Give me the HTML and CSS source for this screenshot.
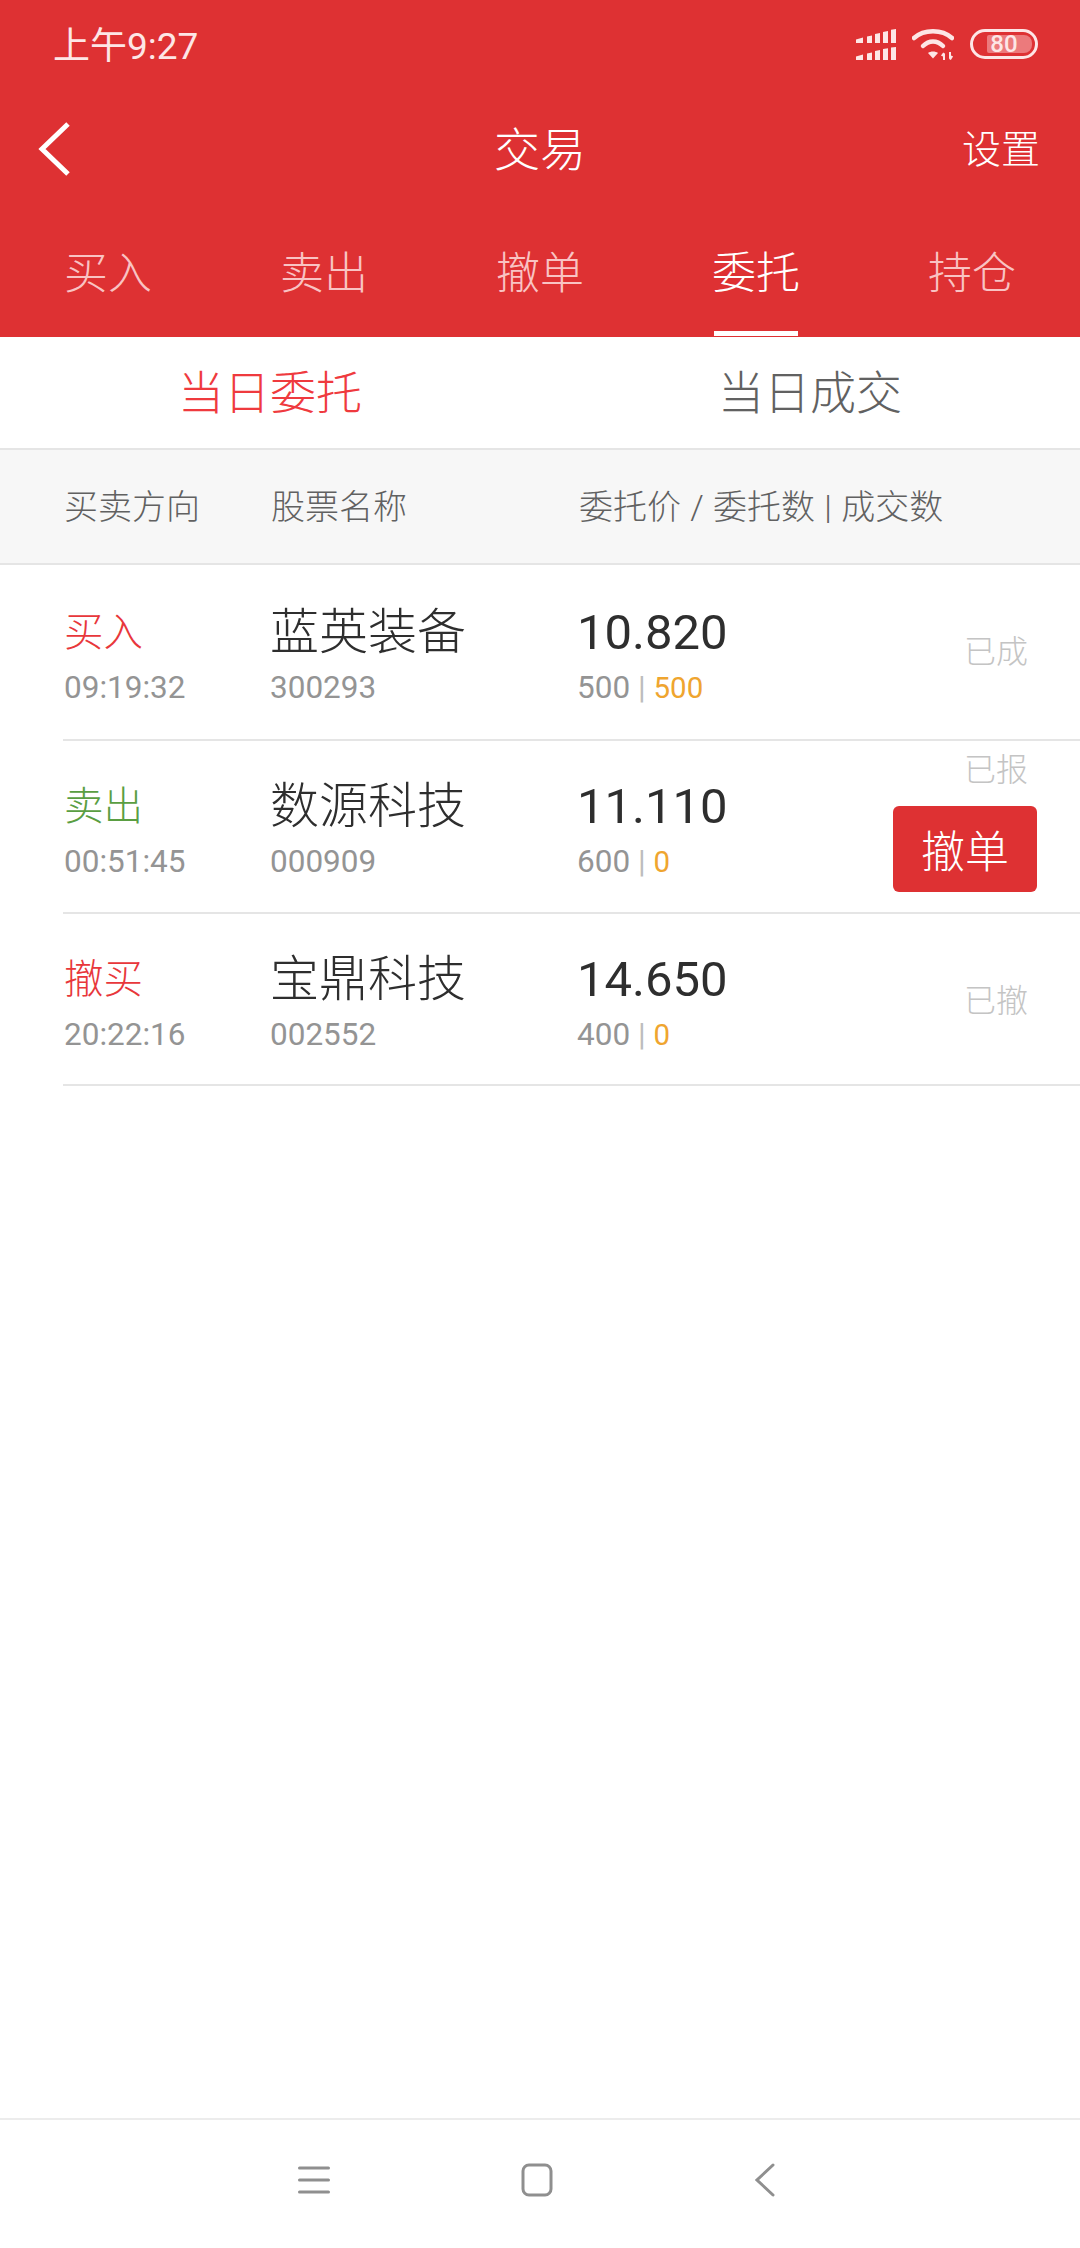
FILE: index.html
```html
<!DOCTYPE html>
<html>
<head>
  <meta charset="utf-8">
  <title>交易</title>
  <link rel="stylesheet" href="styles.css">
</head>
<body>

<div class="page">
  <!-- 顶部红色区域 -->
  <header class="top">
    <div class="status">
      <span class="clock">上午9:27</span>
      <div class="status-icons">
        <svg width="40" height="31" viewBox="0 0 40 31" fill="#fde6e6">
          <path d="M0 10.500L7 8.500V14H0zM11 7.500L16 6.500V14H11zM19 5L24 4V14H19zM27 3L32 2V14H27zM35 .8L40 0V14H35z"/>
          <path d="M0 27.500L7 25.500V31H0zM11 24.500L16 23.500V31H11zM19 22L24 21V31H19zM27 20L32 19.200V31H27zM35 18.600L40 18V31H35z"/>
        </svg>
        <svg class="wifi" width="42" height="31" viewBox="0 0 42 31">
          <path d="M2 9C12 0 30 0 40 9" fill="none" stroke="#fde6e6" stroke-width="4.500" stroke-linecap="round"/>
          <path d="M11 17C17 11 25 11 31 17" fill="none" stroke="#fde6e6" stroke-width="4.500" stroke-linecap="round"/>
          <path d="M16 24C18.500 22 23.500 22 26 24L21 29.500Z" fill="#fde6e6"/>
          <path d="M32 31V24.500M29.800 27L32 24M38 23V29.500M40.200 27L38 30.500" fill="none" stroke="#fde6e6" stroke-width="2"/>
        </svg>
        <div class="battery">
          <div class="battery-fill"></div>
          <span class="battery-num">80</span>
        </div>
      </div>
    </div>

    <div class="title-bar">
      <svg class="back" width="34" height="56" viewBox="0 0 34 56">
        <path d="M31 3L5 28L31 53" fill="none" stroke="#fff" stroke-width="5"/>
      </svg>
      <div class="title">交易</div>
      <div class="setting">设置</div>
    </div>

    <nav class="tabs">
      <div class="tab">买入</div>
      <div class="tab">卖出</div>
      <div class="tab">撤单</div>
      <div class="tab tab-on">委托</div>
      <div class="tab">持仓</div>
    </nav>
  </header>

  <div class="subtabs">
    <div class="subtab subtab-on">当日委托</div>
    <div class="subtab">当日成交</div>
  </div>

  <div class="table-head">
    <div class="col-dir">买卖方向</div>
    <div class="col-name">股票名称</div>
    <div class="col-price">委托价 / 委托数 | 成交数</div>
  </div>

  <!-- 委托列表 -->
  <div class="list">
    <div class="row">
      <div class="col-dir">
        <div class="dir red">买入</div>
        <div class="sub">09:19:32</div>
      </div>
      <div class="col-name">
        <div class="name">蓝英装备</div>
        <div class="sub">300293</div>
      </div>
      <div class="col-price">
        <div class="price">10.820</div>
        <div class="sub">500 <span class="sep">|</span> <span class="done">500</span></div>
      </div>
      <div class="col-state">
        <div class="state">已成</div>
      </div>
    </div>

    <div class="row">
      <div class="col-dir">
        <div class="dir green">卖出</div>
        <div class="sub">00:51:45</div>
      </div>
      <div class="col-name">
        <div class="name">数源科技</div>
        <div class="sub">000909</div>
      </div>
      <div class="col-price">
        <div class="price">11.110</div>
        <div class="sub">600 <span class="sep">|</span> <span class="done">0</span></div>
      </div>
      <div class="col-state col-state-btn">
        <div class="state">已报</div>
        <button class="cancel">撤单</button>
      </div>
    </div>

    <div class="row">
      <div class="col-dir">
        <div class="dir red">撤买</div>
        <div class="sub">20:22:16</div>
      </div>
      <div class="col-name">
        <div class="name">宝鼎科技</div>
        <div class="sub">002552</div>
      </div>
      <div class="col-price">
        <div class="price">14.650</div>
        <div class="sub">400 <span class="sep">|</span> <span class="done">0</span></div>
      </div>
      <div class="col-state">
        <div class="state">已撤</div>
      </div>
    </div>
  </div>

  <!-- 底部导航 -->
  <footer class="nav">
    <svg width="32" height="30" viewBox="0 0 32 30">
      <path d="M1.500 3H30.500M1.500 15H30.500M1.500 27H30.500" fill="none" stroke="#8f8f8f" stroke-width="3" stroke-linecap="round"/>
    </svg>
    <svg width="32" height="34" viewBox="0 0 32 34">
      <rect x="2" y="2" width="28" height="30" rx="6" fill="none" stroke="#8f8f8f" stroke-width="3"/>
    </svg>
    <svg class="nav-back" width="20" height="34" viewBox="0 0 20 34">
      <path d="M18 2L2 17L18 32" fill="none" stroke="#8f8f8f" stroke-width="3" stroke-linecap="round"/>
    </svg>
  </footer>
</div>

</body>
</html>
```

FILE: styles.css
```css
* {
  box-sizing: border-box;
}

body {
  margin: 0;
  font-family: "Roboto", "Noto Sans CJK SC", sans-serif;
  background: #fff;
}

.page {
  width: 1080px;
  height: 2248px;
  display: flex;
  flex-direction: column;
  overflow: hidden;
}

/* 顶部 */
.top {
  height: 337px;
  background: #de3133;
  color: #fff;
}

.status {
  height: 100px;
  padding: 24px 42px 0 53px;
  display: flex;
  justify-content: space-between;
  align-items: flex-start;
}

.clock {
  font-size: 37px;
  line-height: 46px;
  color: #fde6e6;
}

.status-icons {
  display: flex;
  align-items: flex-start;
  gap: 16px;
  padding-top: 5px;
}

.battery {
  width: 68px;
  height: 30px;
  border: 3px solid #fde6e6;
  border-radius: 15px;
  display: flex;
  align-items: center;
  justify-content: center;
  position: relative;
}

.battery-fill {
  position: absolute;
  left: 14px;
  top: 3px;
  width: 45px;
  height: 18px;
  background: #ec7a7c;
  border-radius: 2px 8px 8px 2px;
}

.battery-num {
  position: relative;
  font-size: 24px;
  font-weight: 500;
  line-height: 24px;
  color: #fde6e6;
}

.title-bar {
  height: 100px;
  padding: 0 40px 0 37px;
  display: flex;
  align-items: center;
  justify-content: space-between;
  position: relative;
}

.back {
  margin-top: -2px;
}

.title {
  position: absolute;
  left: 0;
  right: 0;
  text-align: center;
  font-size: 46px;
  font-weight: 300;
  line-height: 100px;
  pointer-events: none;
}

.setting {
  font-size: 39px;
  font-weight: 300;
  line-height: 100px;
}

.tabs {
  display: flex;
}

.tab {
  flex: 1;
  height: 137px;
  padding-top: 44px;
  text-align: center;
  font-size: 44px;
  font-weight: 300;
  line-height: 60px;
  color: #f9c3c3;
}

.tab-on {
  color: #fff;
  position: relative;
}

.tab-on::after {
  content: "";
  position: absolute;
  left: 50%;
  bottom: 1px;
  width: 84px;
  margin-left: -42px;
  height: 5px;
  background: #fff;
}

/* 当日委托 / 当日成交 */
.subtabs {
  height: 113px;
  display: flex;
  border-bottom: 2px solid #e5e5e5;
}

.subtab {
  flex: 1;
  text-align: center;
  font-size: 46px;
  font-weight: 300;
  line-height: 112px;
  color: #616161;
}

.subtab-on {
  color: #ef3a3e;
}

/* 表头 */
.table-head {
  height: 115px;
  padding: 0 0 5px 64px;
  display: flex;
  align-items: center;
  background: #f7f7f7;
  border-bottom: 2px solid #e5e5e5;
  font-size: 34px;
  font-weight: 300;
  color: #616161;
  white-space: nowrap;
  word-spacing: 1px;
}

.col-dir {
  width: 207px;
}

.col-name {
  width: 308px;
}

.col-price {
  width: 315px;
}

/* 列表 */
.list {
  flex: 1;
  padding-left: 63px;
}

.row {
  height: 172.500px;
  padding-top: 36px;
  display: flex;
  border-bottom: 2px solid #e5e5e5;
}

.row:first-child {
  height: 176px;
  padding-top: 38px;
}

.row .col-dir {
  padding-left: 1px;
}

.row .col-price {
  margin-left: -1px;
}

.dir {
  font-size: 39.500px;
  font-weight: 300;
  line-height: 60px;
}

.red {
  color: #e8373b;
}

.green {
  color: #5a9e42;
}

.name {
  font-size: 49px;
  font-weight: 300;
  line-height: 60px;
  color: #2e2e2e;
}

.price {
  font-size: 49px;
  line-height: 60px;
  color: #2e2e2e;
}

.sub {
  font-size: 31.500px;
  line-height: 44px;
  margin-top: 3px;
  color: #949494;
}

.sep {
  color: #bdbdbd;
}

.done {
  font-size: 29.500px;
  color: #efa52f;
}

.col-state {
  flex: 1;
  padding: 29px 52px 0 0;
  text-align: right;
}

.row:first-child .col-state {
  padding-top: 27px;
}

.state {
  font-size: 32px;
  font-weight: 300;
  line-height: 44px;
  color: #c4c4c4;
}

.col-state-btn {
  padding: 0 43px 0 0;
  margin-top: -29px;
}

.col-state-btn .state {
  padding-right: 9px;
}

.cancel {
  display: block;
  margin: 14px 0 0 auto;
  width: 144px;
  height: 86px;
  padding: 0;
  border: 0;
  border-radius: 6px;
  background: #de3133;
  color: #fff;
  font-family: inherit;
  font-size: 44px;
  font-weight: 300;
}

/* 底部导航 */
.nav {
  height: 130px;
  border-top: 2px solid #ececec;
  padding: 0 0 8px 298px;
  display: flex;
  align-items: center;
  gap: 191px;
}

.nav-back {
  margin-left: 11px;
}
```
